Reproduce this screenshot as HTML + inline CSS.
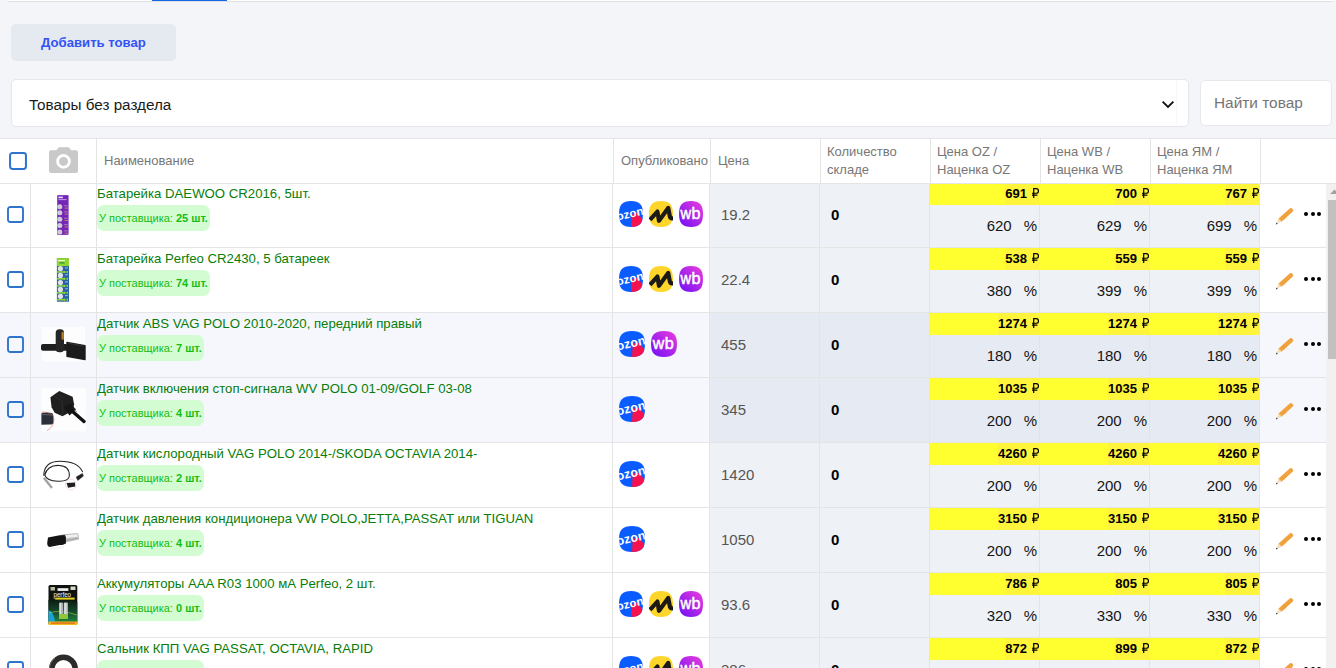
<!DOCTYPE html><html><head><meta charset="utf-8"><style>
*{box-sizing:border-box;margin:0;padding:0}
html,body{width:1336px;height:668px;overflow:hidden;background:#f4f5f9;font-family:"Liberation Sans",sans-serif;position:relative}
.abs{position:absolute}
.t{position:absolute;white-space:nowrap;line-height:1}
.vl{position:absolute;width:1px;background:#e4e4e4}
.hl{position:absolute;height:1px;background:#e5e5e5}
.rub{display:inline-block;vertical-align:baseline;margin-left:5px}
</style></head><body>
<div class="abs" style="left:8px;top:0;width:1326px;height:1px;background:#fff"></div>
<div class="abs" style="left:8px;top:1px;width:1326px;height:1px;background:#e1e1e3"></div>
<div class="abs" style="left:152px;top:0;width:75px;height:1px;background:#1565e8"></div>
<div class="abs" style="left:11px;top:24px;width:165px;height:37px;background:#e5e9f0;border-radius:5px"></div>
<div class="t" style="left:41px;top:36px;font-size:13.15px;font-weight:bold;color:#3352f5">Добавить товар</div>
<div class="abs" style="left:11px;top:79px;width:1178px;height:48px;background:#fff;border:1px solid #e4e6eb;border-radius:5px"></div>
<div class="t" style="left:29px;top:97px;font-size:15.25px;color:#1a1a1a">Товары без раздела</div>
<svg class="abs" style="left:1160px;top:98px" width="16" height="12" viewBox="0 0 16 12"><path d="M2.6 3.6 8 8.9 13.4 3.6" fill="none" stroke="#111" stroke-width="1.9"/></svg>
<div class="abs" style="left:1176px;top:80px;width:1px;height:46px;background:#f8f8fa"></div>
<div class="abs" style="left:1200px;top:80px;width:132px;height:46px;background:#fff;border:1px solid #e6e8ec;border-radius:5px"></div>
<div class="t" style="left:1214px;top:95px;font-size:15.4px;color:#757575">Найти товар</div>
<div class="abs" style="left:0;top:138px;width:1336px;height:530px;background:#fff"></div>
<div class="hl" style="left:0;top:138px;width:1336px"></div>
<div class="abs" style="left:0;top:183px;width:1326px;height:64px;background:#fff"></div>
<div class="abs" style="left:710px;top:183px;width:549px;height:64px;background:#eef1f6"></div>
<div class="abs" style="left:930px;top:183px;width:109px;height:22px;background:#ffff30"></div>
<div class="abs" style="left:1040px;top:183px;width:109px;height:22px;background:#ffff30"></div>
<div class="abs" style="left:1150px;top:183px;width:109px;height:22px;background:#ffff30"></div>
<div class="hl" style="left:0;top:247px;width:1326px"></div>
<svg class="abs" style="left:7px;top:206px" width="17" height="17" viewBox="0 0 17 17"><rect x="1" y="1" width="15" height="15" rx="2.2" fill="none" stroke="#2f74cc" stroke-width="1.9"/></svg>
<div class="abs" style="left:0;top:183px;width:96px;height:64px"><svg class="abs" style="left:31px;top:0" width="65" height="64" viewBox="0 0 65 64"><rect x="26.1" y="12.1" width="11.6" height="39.8" rx="0.8" fill="#8a4ac8"/><rect x="26.8" y="12.8" width="10.2" height="38.4" fill="#7327b8"/><rect x="27.4" y="13.6" width="4.5" height="1.6" fill="#e6d8f5"/><rect x="27.6" y="16.2" width="8" height="0.9" fill="#c8a8ea"/><circle cx="28.8" cy="23.8" r="2.5" fill="#cfcdd6"/><rect x="33.2" y="22.400000000000002" width="3.4" height="0.9" fill="#b78ab0"/><rect x="33.6" y="24.6" width="3.4" height="1" fill="#d07a50"/><circle cx="28.8" cy="29.8" r="2.5" fill="#cfcdd6"/><rect x="33.2" y="28.400000000000002" width="3.4" height="0.9" fill="#b78ab0"/><rect x="33.6" y="30.6" width="3.4" height="1" fill="#d07a50"/><circle cx="28.8" cy="36.2" r="2.5" fill="#cfcdd6"/><rect x="33.2" y="34.800000000000004" width="3.4" height="0.9" fill="#b78ab0"/><rect x="33.6" y="37.0" width="3.4" height="1" fill="#d07a50"/><circle cx="28.8" cy="42.6" r="2.5" fill="#cfcdd6"/><rect x="33.2" y="41.2" width="3.4" height="0.9" fill="#b78ab0"/><rect x="33.6" y="43.4" width="3.4" height="1" fill="#d07a50"/><circle cx="28.8" cy="48.9" r="2.5" fill="#cfcdd6"/><rect x="33.2" y="47.5" width="3.4" height="0.9" fill="#b78ab0"/><rect x="33.6" y="49.699999999999996" width="3.4" height="1" fill="#d07a50"/></svg></div>
<div class="t" style="left:97px;top:187px;font-size:13.2px;color:#087d08">Батарейка DAEWOO CR2016, 5шт.</div>
<div class="t" style="left:97px;top:205px;height:26px;line-height:26px;padding:0 2px;background:#d3fcd3;border-radius:7px;font-size:11px;color:#14bd14">У поставщика: <b>25 шт.</b></div>
<div class="abs" style="left:619px;top:201px;height:26px"><svg class="mp" width="24" height="26" viewBox="0 0 24 26"><defs><clipPath id="sq0o"><path d="M12.0 0C20.52 0 24 3.77 24 13.0C24 22.23 20.52 26 12.0 26C3.48 26 0 22.23 0 13.0C0 3.77 3.48 0 12.0 0Z"/></clipPath></defs><g clip-path="url(#sq0o)"><rect width="24" height="26" fill="#0a5cff"/><path d="M12.00 26 12.60 14.5 15.00 11.5 18.50 12 24 19.2V26Z" fill="#f5124f"/><g transform="translate(-1.40 19.6) rotate(-13)"><text x="0" y="0" font-family="Liberation Sans" font-weight="bold" font-size="11.50" letter-spacing="0.10" fill="#fff">ozon</text></g></g></svg></div>
<div class="abs" style="left:649px;top:201px;height:26px"><svg class="mp" width="24" height="26" viewBox="0 0 24 26"><path d="M12.0 0C20.52 0 24 3.77 24 13.0C24 22.23 20.52 26 12.0 26C3.48 26 0 22.23 0 13.0C0 3.77 3.48 0 12.0 0Z" fill="#fdd52b"/><path d="M1.00 18.8 8.40 10.6 10.00 19.8 19.20 7 21.00 16.2Q21.80 18 25.00 17.2" fill="none" stroke="#1b1a17" stroke-width="4.2" stroke-linejoin="round"/></svg></div>
<div class="abs" style="left:679px;top:201px;height:26px"><svg class="mp" width="24" height="26" viewBox="0 0 24 26"><defs><linearGradient id="wg0w" x1="1" y1="0" x2="0" y2="1"><stop offset="0" stop-color="#ee3ddc"/><stop offset="1" stop-color="#6c0ff6"/></linearGradient></defs><path d="M12.0 0C20.52 0 24 3.77 24 13.0C24 22.23 20.52 26 12.0 26C3.48 26 0 22.23 0 13.0C0 3.77 3.48 0 12.0 0Z" fill="url(#wg0w)"/><text y="18" font-family="Liberation Sans" font-size="16.2" fill="#fff" stroke="#fff" stroke-width="0.5"><tspan x="1.60" textLength="10.60" lengthAdjust="spacingAndGlyphs">w</tspan><tspan x="12.60">b</tspan></text></svg></div>
<div class="t" style="left:721px;top:207px;font-size:15px;color:#555">19.2</div>
<div class="t" style="left:831px;top:207px;font-size:15px;font-weight:bold;color:#000">0</div>
<div class="t" style="right:297px;top:183px;height:22px;line-height:22px;font-size:13px;font-weight:bold;color:#000;background:#fff43c;padding-right:0">691<svg class="rub" width="7" height="10" viewBox="0 0 7 10"><path d="M1.7 10V0.65h2.5a2.3 2.3 0 0 1 0 4.6H0M0 7.1h5.4" fill="none" stroke="#000" stroke-width="1.2"/></svg></div>
<div class="t" style="right:299px;top:218px;font-size:15px;color:#151515">620<span style="margin-left:12px">%</span></div>
<div class="t" style="right:187px;top:183px;height:22px;line-height:22px;font-size:13px;font-weight:bold;color:#000;background:#fff43c;padding-right:0">700<svg class="rub" width="7" height="10" viewBox="0 0 7 10"><path d="M1.7 10V0.65h2.5a2.3 2.3 0 0 1 0 4.6H0M0 7.1h5.4" fill="none" stroke="#000" stroke-width="1.2"/></svg></div>
<div class="t" style="right:189px;top:218px;font-size:15px;color:#151515">629<span style="margin-left:12px">%</span></div>
<div class="t" style="right:77px;top:183px;height:22px;line-height:22px;font-size:13px;font-weight:bold;color:#000;background:#fff43c;padding-right:0">767<svg class="rub" width="7" height="10" viewBox="0 0 7 10"><path d="M1.7 10V0.65h2.5a2.3 2.3 0 0 1 0 4.6H0M0 7.1h5.4" fill="none" stroke="#000" stroke-width="1.2"/></svg></div>
<div class="t" style="right:79px;top:218px;font-size:15px;color:#151515">699<span style="margin-left:12px">%</span></div>
<svg class="abs" style="left:1274px;top:206px" width="20" height="20" viewBox="0 0 20 20"><path d="M6.6 13.6 16.9 4.4" stroke="#f0a23e" stroke-width="4.4" stroke-linecap="round"/><path d="M8.4 11.2 11 13.4M10 9.8 12.6 12" stroke="#e59430" stroke-width="0.5"/><path d="M4.6 12.6 7.8 15.6 2.8 17.6Z" fill="#f4dcb4"/><path d="M2.4 16.4 3.9 17.8 1.9 18.5Z" fill="#3a3a3a"/></svg>
<div class="abs" style="left:1304.0px;top:212.3px;width:4.1px;height:4.1px;border-radius:50%;background:#000"></div>
<div class="abs" style="left:1310.7px;top:212.3px;width:4.1px;height:4.1px;border-radius:50%;background:#000"></div>
<div class="abs" style="left:1317.4px;top:212.3px;width:4.1px;height:4.1px;border-radius:50%;background:#000"></div>
<div class="abs" style="left:0;top:248px;width:1326px;height:64px;background:#fff"></div>
<div class="abs" style="left:710px;top:248px;width:549px;height:64px;background:#eef1f6"></div>
<div class="abs" style="left:930px;top:248px;width:109px;height:22px;background:#ffff30"></div>
<div class="abs" style="left:1040px;top:248px;width:109px;height:22px;background:#ffff30"></div>
<div class="abs" style="left:1150px;top:248px;width:109px;height:22px;background:#ffff30"></div>
<div class="hl" style="left:0;top:312px;width:1326px"></div>
<svg class="abs" style="left:7px;top:271px" width="17" height="17" viewBox="0 0 17 17"><rect x="1" y="1" width="15" height="15" rx="2.2" fill="none" stroke="#2f74cc" stroke-width="1.9"/></svg>
<div class="abs" style="left:0;top:248px;width:96px;height:64px"><svg class="abs" style="left:31px;top:0" width="65" height="64" viewBox="0 0 65 64"><rect x="25.9" y="10.1" width="12.1" height="43.6" fill="#2b62a6"/><rect x="25.9" y="10.1" width="12.1" height="8" fill="#8fd633"/><rect x="27" y="12" width="7" height="1.2" fill="#e9f8d0"/><rect x="28.5" y="14.3" width="5" height="1.2" fill="#3a8a30"/><rect x="25.9" y="23.200000000000003" width="8" height="1.6" fill="#8fd633"/><rect x="33" y="23.0" width="1.5" height="2" fill="#8fd633"/><rect x="35.5" y="23.0" width="1.5" height="2" fill="#8fd633"/><circle cx="29.4" cy="20.6" r="2.6" fill="#dfe3e6"/><rect x="34" y="19.6" width="3" height="0.8" fill="#b8d0e8"/><rect x="25.9" y="30.0" width="8" height="1.6" fill="#8fd633"/><rect x="33" y="29.799999999999997" width="1.5" height="2" fill="#8fd633"/><rect x="35.5" y="29.799999999999997" width="1.5" height="2" fill="#8fd633"/><circle cx="29.4" cy="27.4" r="2.6" fill="#dfe3e6"/><rect x="34" y="26.4" width="3" height="0.8" fill="#b8d0e8"/><rect x="25.9" y="37.1" width="8" height="1.6" fill="#8fd633"/><rect x="33" y="36.9" width="1.5" height="2" fill="#8fd633"/><rect x="35.5" y="36.9" width="1.5" height="2" fill="#8fd633"/><circle cx="29.4" cy="34.5" r="2.6" fill="#dfe3e6"/><rect x="34" y="33.5" width="3" height="0.8" fill="#b8d0e8"/><rect x="25.9" y="44.0" width="8" height="1.6" fill="#8fd633"/><rect x="33" y="43.8" width="1.5" height="2" fill="#8fd633"/><rect x="35.5" y="43.8" width="1.5" height="2" fill="#8fd633"/><circle cx="29.4" cy="41.4" r="2.6" fill="#dfe3e6"/><rect x="34" y="40.4" width="3" height="0.8" fill="#b8d0e8"/><rect x="25.9" y="50.9" width="8" height="1.6" fill="#8fd633"/><rect x="33" y="50.699999999999996" width="1.5" height="2" fill="#8fd633"/><rect x="35.5" y="50.699999999999996" width="1.5" height="2" fill="#8fd633"/><circle cx="29.4" cy="48.3" r="2.6" fill="#dfe3e6"/><rect x="34" y="47.3" width="3" height="0.8" fill="#b8d0e8"/></svg></div>
<div class="t" style="left:97px;top:252px;font-size:13.2px;color:#087d08">Батарейка Perfeo CR2430, 5 батареек</div>
<div class="t" style="left:97px;top:270px;height:26px;line-height:26px;padding:0 2px;background:#d3fcd3;border-radius:7px;font-size:11px;color:#14bd14">У поставщика: <b>74 шт.</b></div>
<div class="abs" style="left:619px;top:266px;height:26px"><svg class="mp" width="24" height="26" viewBox="0 0 24 26"><defs><clipPath id="sq1o"><path d="M12.0 0C20.52 0 24 3.77 24 13.0C24 22.23 20.52 26 12.0 26C3.48 26 0 22.23 0 13.0C0 3.77 3.48 0 12.0 0Z"/></clipPath></defs><g clip-path="url(#sq1o)"><rect width="24" height="26" fill="#0a5cff"/><path d="M12.00 26 12.60 14.5 15.00 11.5 18.50 12 24 19.2V26Z" fill="#f5124f"/><g transform="translate(-1.40 19.6) rotate(-13)"><text x="0" y="0" font-family="Liberation Sans" font-weight="bold" font-size="11.50" letter-spacing="0.10" fill="#fff">ozon</text></g></g></svg></div>
<div class="abs" style="left:649px;top:266px;height:26px"><svg class="mp" width="24" height="26" viewBox="0 0 24 26"><path d="M12.0 0C20.52 0 24 3.77 24 13.0C24 22.23 20.52 26 12.0 26C3.48 26 0 22.23 0 13.0C0 3.77 3.48 0 12.0 0Z" fill="#fdd52b"/><path d="M1.00 18.8 8.40 10.6 10.00 19.8 19.20 7 21.00 16.2Q21.80 18 25.00 17.2" fill="none" stroke="#1b1a17" stroke-width="4.2" stroke-linejoin="round"/></svg></div>
<div class="abs" style="left:679px;top:266px;height:26px"><svg class="mp" width="24" height="26" viewBox="0 0 24 26"><defs><linearGradient id="wg1w" x1="1" y1="0" x2="0" y2="1"><stop offset="0" stop-color="#ee3ddc"/><stop offset="1" stop-color="#6c0ff6"/></linearGradient></defs><path d="M12.0 0C20.52 0 24 3.77 24 13.0C24 22.23 20.52 26 12.0 26C3.48 26 0 22.23 0 13.0C0 3.77 3.48 0 12.0 0Z" fill="url(#wg1w)"/><text y="18" font-family="Liberation Sans" font-size="16.2" fill="#fff" stroke="#fff" stroke-width="0.5"><tspan x="1.60" textLength="10.60" lengthAdjust="spacingAndGlyphs">w</tspan><tspan x="12.60">b</tspan></text></svg></div>
<div class="t" style="left:721px;top:272px;font-size:15px;color:#555">22.4</div>
<div class="t" style="left:831px;top:272px;font-size:15px;font-weight:bold;color:#000">0</div>
<div class="t" style="right:297px;top:248px;height:22px;line-height:22px;font-size:13px;font-weight:bold;color:#000;background:#fff43c;padding-right:0">538<svg class="rub" width="7" height="10" viewBox="0 0 7 10"><path d="M1.7 10V0.65h2.5a2.3 2.3 0 0 1 0 4.6H0M0 7.1h5.4" fill="none" stroke="#000" stroke-width="1.2"/></svg></div>
<div class="t" style="right:299px;top:283px;font-size:15px;color:#151515">380<span style="margin-left:12px">%</span></div>
<div class="t" style="right:187px;top:248px;height:22px;line-height:22px;font-size:13px;font-weight:bold;color:#000;background:#fff43c;padding-right:0">559<svg class="rub" width="7" height="10" viewBox="0 0 7 10"><path d="M1.7 10V0.65h2.5a2.3 2.3 0 0 1 0 4.6H0M0 7.1h5.4" fill="none" stroke="#000" stroke-width="1.2"/></svg></div>
<div class="t" style="right:189px;top:283px;font-size:15px;color:#151515">399<span style="margin-left:12px">%</span></div>
<div class="t" style="right:77px;top:248px;height:22px;line-height:22px;font-size:13px;font-weight:bold;color:#000;background:#fff43c;padding-right:0">559<svg class="rub" width="7" height="10" viewBox="0 0 7 10"><path d="M1.7 10V0.65h2.5a2.3 2.3 0 0 1 0 4.6H0M0 7.1h5.4" fill="none" stroke="#000" stroke-width="1.2"/></svg></div>
<div class="t" style="right:79px;top:283px;font-size:15px;color:#151515">399<span style="margin-left:12px">%</span></div>
<svg class="abs" style="left:1274px;top:271px" width="20" height="20" viewBox="0 0 20 20"><path d="M6.6 13.6 16.9 4.4" stroke="#f0a23e" stroke-width="4.4" stroke-linecap="round"/><path d="M8.4 11.2 11 13.4M10 9.8 12.6 12" stroke="#e59430" stroke-width="0.5"/><path d="M4.6 12.6 7.8 15.6 2.8 17.6Z" fill="#f4dcb4"/><path d="M2.4 16.4 3.9 17.8 1.9 18.5Z" fill="#3a3a3a"/></svg>
<div class="abs" style="left:1304.0px;top:277.3px;width:4.1px;height:4.1px;border-radius:50%;background:#000"></div>
<div class="abs" style="left:1310.7px;top:277.3px;width:4.1px;height:4.1px;border-radius:50%;background:#000"></div>
<div class="abs" style="left:1317.4px;top:277.3px;width:4.1px;height:4.1px;border-radius:50%;background:#000"></div>
<div class="abs" style="left:0;top:313px;width:1326px;height:64px;background:#f5f7fc"></div>
<div class="abs" style="left:710px;top:313px;width:549px;height:64px;background:#e6eaf2"></div>
<div class="abs" style="left:930px;top:313px;width:109px;height:22px;background:#ffff30"></div>
<div class="abs" style="left:1040px;top:313px;width:109px;height:22px;background:#ffff30"></div>
<div class="abs" style="left:1150px;top:313px;width:109px;height:22px;background:#ffff30"></div>
<div class="hl" style="left:0;top:377px;width:1326px"></div>
<svg class="abs" style="left:7px;top:336px" width="17" height="17" viewBox="0 0 17 17"><rect x="1" y="1" width="15" height="15" rx="2.2" fill="none" stroke="#2f74cc" stroke-width="1.9"/></svg>
<div class="abs" style="left:0;top:313px;width:96px;height:64px"><svg class="abs" style="left:31px;top:0" width="65" height="64" viewBox="0 0 65 64"><rect x="11" y="14" width="43" height="34.5" fill="#fdfdfd"/><rect x="10" y="31" width="27" height="6.8" rx="2" fill="#1f1f1f"/><rect x="24.7" y="16.2" width="8.3" height="23.1" rx="3.6" fill="#262626"/><rect x="30.5" y="19" width="2.4" height="7.8" rx="1" fill="#b87a24"/><path d="M36 29.4 54 32.7 54 46.5 36 43.2Z" fill="#1b1b1b" stroke="#1b1b1b" stroke-width="1.4" stroke-linejoin="round"/><path d="M37 30.2 53 33" stroke="#3a3a3a" stroke-width="0.8"/></svg></div>
<div class="t" style="left:97px;top:317px;font-size:13.2px;color:#087d08">Датчик ABS VAG POLO 2010-2020, передний правый</div>
<div class="t" style="left:97px;top:335px;height:26px;line-height:26px;padding:0 2px;background:#d3fcd3;border-radius:7px;font-size:11px;color:#14bd14">У поставщика: <b>7 шт.</b></div>
<div class="abs" style="left:619px;top:331px;height:26px"><svg class="mp" width="26" height="26" viewBox="0 0 26 26"><defs><clipPath id="sq2o"><path d="M13.0 0C22.23 0 26 3.77 26 13.0C26 22.23 22.23 26 13.0 26C3.77 26 0 22.23 0 13.0C0 3.77 3.77 0 13.0 0Z"/></clipPath></defs><g clip-path="url(#sq2o)"><rect width="26" height="26" fill="#0a5cff"/><path d="M13.00 26 13.65 14.5 16.25 11.5 20.04 12 26 19.2V26Z" fill="#f5124f"/><g transform="translate(-1.52 19.6) rotate(-13)"><text x="0" y="0" font-family="Liberation Sans" font-weight="bold" font-size="12.46" letter-spacing="0.11" fill="#fff">ozon</text></g></g></svg></div>
<div class="abs" style="left:651px;top:331px;height:26px"><svg class="mp" width="26" height="26" viewBox="0 0 26 26"><defs><linearGradient id="wg2w" x1="1" y1="0" x2="0" y2="1"><stop offset="0" stop-color="#ee3ddc"/><stop offset="1" stop-color="#6c0ff6"/></linearGradient></defs><path d="M13.0 0C22.23 0 26 3.77 26 13.0C26 22.23 22.23 26 13.0 26C3.77 26 0 22.23 0 13.0C0 3.77 3.77 0 13.0 0Z" fill="url(#wg2w)"/><text y="18" font-family="Liberation Sans" font-size="16.2" fill="#fff" stroke="#fff" stroke-width="0.5"><tspan x="1.73" textLength="11.48" lengthAdjust="spacingAndGlyphs">w</tspan><tspan x="13.65">b</tspan></text></svg></div>
<div class="t" style="left:721px;top:337px;font-size:15px;color:#555">455</div>
<div class="t" style="left:831px;top:337px;font-size:15px;font-weight:bold;color:#000">0</div>
<div class="t" style="right:297px;top:313px;height:22px;line-height:22px;font-size:13px;font-weight:bold;color:#000;background:#fff43c;padding-right:0">1274<svg class="rub" width="7" height="10" viewBox="0 0 7 10"><path d="M1.7 10V0.65h2.5a2.3 2.3 0 0 1 0 4.6H0M0 7.1h5.4" fill="none" stroke="#000" stroke-width="1.2"/></svg></div>
<div class="t" style="right:299px;top:348px;font-size:15px;color:#151515">180<span style="margin-left:12px">%</span></div>
<div class="t" style="right:187px;top:313px;height:22px;line-height:22px;font-size:13px;font-weight:bold;color:#000;background:#fff43c;padding-right:0">1274<svg class="rub" width="7" height="10" viewBox="0 0 7 10"><path d="M1.7 10V0.65h2.5a2.3 2.3 0 0 1 0 4.6H0M0 7.1h5.4" fill="none" stroke="#000" stroke-width="1.2"/></svg></div>
<div class="t" style="right:189px;top:348px;font-size:15px;color:#151515">180<span style="margin-left:12px">%</span></div>
<div class="t" style="right:77px;top:313px;height:22px;line-height:22px;font-size:13px;font-weight:bold;color:#000;background:#fff43c;padding-right:0">1274<svg class="rub" width="7" height="10" viewBox="0 0 7 10"><path d="M1.7 10V0.65h2.5a2.3 2.3 0 0 1 0 4.6H0M0 7.1h5.4" fill="none" stroke="#000" stroke-width="1.2"/></svg></div>
<div class="t" style="right:79px;top:348px;font-size:15px;color:#151515">180<span style="margin-left:12px">%</span></div>
<svg class="abs" style="left:1274px;top:336px" width="20" height="20" viewBox="0 0 20 20"><path d="M6.6 13.6 16.9 4.4" stroke="#f0a23e" stroke-width="4.4" stroke-linecap="round"/><path d="M8.4 11.2 11 13.4M10 9.8 12.6 12" stroke="#e59430" stroke-width="0.5"/><path d="M4.6 12.6 7.8 15.6 2.8 17.6Z" fill="#f4dcb4"/><path d="M2.4 16.4 3.9 17.8 1.9 18.5Z" fill="#3a3a3a"/></svg>
<div class="abs" style="left:1304.0px;top:342.3px;width:4.1px;height:4.1px;border-radius:50%;background:#000"></div>
<div class="abs" style="left:1310.7px;top:342.3px;width:4.1px;height:4.1px;border-radius:50%;background:#000"></div>
<div class="abs" style="left:1317.4px;top:342.3px;width:4.1px;height:4.1px;border-radius:50%;background:#000"></div>
<div class="abs" style="left:0;top:378px;width:1326px;height:64px;background:#f5f7fc"></div>
<div class="abs" style="left:710px;top:378px;width:549px;height:64px;background:#e6eaf2"></div>
<div class="abs" style="left:930px;top:378px;width:109px;height:22px;background:#ffff30"></div>
<div class="abs" style="left:1040px;top:378px;width:109px;height:22px;background:#ffff30"></div>
<div class="abs" style="left:1150px;top:378px;width:109px;height:22px;background:#ffff30"></div>
<div class="hl" style="left:0;top:442px;width:1326px"></div>
<svg class="abs" style="left:7px;top:401px" width="17" height="17" viewBox="0 0 17 17"><rect x="1" y="1" width="15" height="15" rx="2.2" fill="none" stroke="#2f74cc" stroke-width="1.9"/></svg>
<div class="abs" style="left:0;top:378px;width:96px;height:64px"><svg class="abs" style="left:31px;top:0" width="65" height="64" viewBox="0 0 65 64"><rect x="10.4" y="9.9" width="44.4" height="43.6" fill="#fdfdfd"/><path d="M19.4 19.2 28.3 13 41.6 18.8 43.1 26.2 42 32.5 31.5 38.2 23.7 34.8 20.6 29.3Z" fill="#1f1f1f"/><path d="M22 17.5 31 23 32 37" stroke="#383838" stroke-width="0.6" fill="none"/><path d="M25 15.5 34 20.5" stroke="#333" stroke-width="0.5"/><path d="M32.5 29 39.5 25.5 45 31.5 38.5 37.5Z" fill="#161616"/><path d="M41 33 53 43.5" stroke="#111" stroke-width="3.4" stroke-linecap="round"/><path d="M42 30.5 46 34" stroke="#444" stroke-width="0.5"/><path d="M10.4 35.5Q11 34.4 16 34.4L21 35Q22.5 36 22.5 40V45Q22 46.5 18 46.5L10.4 46.8Z" fill="#2b313b"/><path d="M11 36.5 21 37" stroke="#5a6270" stroke-width="1"/><path d="M10.8 34Q22.5 34 23 41Q22.5 49.5 16 52.5" stroke="#e05858" stroke-width="0.55" fill="none"/></svg></div>
<div class="t" style="left:97px;top:382px;font-size:13.2px;color:#087d08">Датчик включения стоп-сигнала WV POLO 01-09/GOLF 03-08</div>
<div class="t" style="left:97px;top:400px;height:26px;line-height:26px;padding:0 2px;background:#d3fcd3;border-radius:7px;font-size:11px;color:#14bd14">У поставщика: <b>4 шт.</b></div>
<div class="abs" style="left:619px;top:396px;height:26px"><svg class="mp" width="26" height="26" viewBox="0 0 26 26"><defs><clipPath id="sq3o"><path d="M13.0 0C22.23 0 26 3.77 26 13.0C26 22.23 22.23 26 13.0 26C3.77 26 0 22.23 0 13.0C0 3.77 3.77 0 13.0 0Z"/></clipPath></defs><g clip-path="url(#sq3o)"><rect width="26" height="26" fill="#0a5cff"/><path d="M13.00 26 13.65 14.5 16.25 11.5 20.04 12 26 19.2V26Z" fill="#f5124f"/><g transform="translate(-1.52 19.6) rotate(-13)"><text x="0" y="0" font-family="Liberation Sans" font-weight="bold" font-size="12.46" letter-spacing="0.11" fill="#fff">ozon</text></g></g></svg></div>
<div class="t" style="left:721px;top:402px;font-size:15px;color:#555">345</div>
<div class="t" style="left:831px;top:402px;font-size:15px;font-weight:bold;color:#000">0</div>
<div class="t" style="right:297px;top:378px;height:22px;line-height:22px;font-size:13px;font-weight:bold;color:#000;background:#fff43c;padding-right:0">1035<svg class="rub" width="7" height="10" viewBox="0 0 7 10"><path d="M1.7 10V0.65h2.5a2.3 2.3 0 0 1 0 4.6H0M0 7.1h5.4" fill="none" stroke="#000" stroke-width="1.2"/></svg></div>
<div class="t" style="right:299px;top:413px;font-size:15px;color:#151515">200<span style="margin-left:12px">%</span></div>
<div class="t" style="right:187px;top:378px;height:22px;line-height:22px;font-size:13px;font-weight:bold;color:#000;background:#fff43c;padding-right:0">1035<svg class="rub" width="7" height="10" viewBox="0 0 7 10"><path d="M1.7 10V0.65h2.5a2.3 2.3 0 0 1 0 4.6H0M0 7.1h5.4" fill="none" stroke="#000" stroke-width="1.2"/></svg></div>
<div class="t" style="right:189px;top:413px;font-size:15px;color:#151515">200<span style="margin-left:12px">%</span></div>
<div class="t" style="right:77px;top:378px;height:22px;line-height:22px;font-size:13px;font-weight:bold;color:#000;background:#fff43c;padding-right:0">1035<svg class="rub" width="7" height="10" viewBox="0 0 7 10"><path d="M1.7 10V0.65h2.5a2.3 2.3 0 0 1 0 4.6H0M0 7.1h5.4" fill="none" stroke="#000" stroke-width="1.2"/></svg></div>
<div class="t" style="right:79px;top:413px;font-size:15px;color:#151515">200<span style="margin-left:12px">%</span></div>
<svg class="abs" style="left:1274px;top:401px" width="20" height="20" viewBox="0 0 20 20"><path d="M6.6 13.6 16.9 4.4" stroke="#f0a23e" stroke-width="4.4" stroke-linecap="round"/><path d="M8.4 11.2 11 13.4M10 9.8 12.6 12" stroke="#e59430" stroke-width="0.5"/><path d="M4.6 12.6 7.8 15.6 2.8 17.6Z" fill="#f4dcb4"/><path d="M2.4 16.4 3.9 17.8 1.9 18.5Z" fill="#3a3a3a"/></svg>
<div class="abs" style="left:1304.0px;top:407.3px;width:4.1px;height:4.1px;border-radius:50%;background:#000"></div>
<div class="abs" style="left:1310.7px;top:407.3px;width:4.1px;height:4.1px;border-radius:50%;background:#000"></div>
<div class="abs" style="left:1317.4px;top:407.3px;width:4.1px;height:4.1px;border-radius:50%;background:#000"></div>
<div class="abs" style="left:0;top:443px;width:1326px;height:64px;background:#fff"></div>
<div class="abs" style="left:710px;top:443px;width:549px;height:64px;background:#eef1f6"></div>
<div class="abs" style="left:930px;top:443px;width:109px;height:22px;background:#ffff30"></div>
<div class="abs" style="left:1040px;top:443px;width:109px;height:22px;background:#ffff30"></div>
<div class="abs" style="left:1150px;top:443px;width:109px;height:22px;background:#ffff30"></div>
<div class="hl" style="left:0;top:507px;width:1326px"></div>
<svg class="abs" style="left:7px;top:466px" width="17" height="17" viewBox="0 0 17 17"><rect x="1" y="1" width="15" height="15" rx="2.2" fill="none" stroke="#2f74cc" stroke-width="1.9"/></svg>
<div class="abs" style="left:0;top:443px;width:96px;height:64px"><svg class="abs" style="left:31px;top:0" width="65" height="64" viewBox="0 0 65 64"><path d="M12.7 32.8C13 22 20 18.3 29 18.3C40 18.3 48 21 51.7 29" stroke="#222" stroke-width="1.05" fill="none"/><path d="M13.5 32.5C15.5 25 21 22.2 27.8 22.4C34 22.5 38.5 25 38.4 32.8C38 37 33 38.5 27 38.3C20 38 15 36 13.9 32.1" stroke="#222" stroke-width="1.05" fill="none"/><path d="M45.2 34 51.4 30.4 52.4 33 46.8 37.4Z" fill="#222" stroke="#222" stroke-width="0.5" stroke-linejoin="round"/><path d="M12.8 34.8 21 45" stroke="#a8a8a8" stroke-width="2.4"/><path d="M14 36.6 20 44" stroke="#7a7a7a" stroke-width="0.6" stroke-dasharray="0.8 0.8"/><circle cx="39.7" cy="41.6" r="5.4" fill="#fff" stroke="#f0b8b8" stroke-width="0.5"/><path d="M35.6 40 44 39.4 44.2 43.5 37 44.8Z" fill="#1e1e1e"/></svg></div>
<div class="t" style="left:97px;top:447px;font-size:13.2px;color:#087d08">Датчик кислородный VAG POLO 2014-/SKODA OCTAVIA 2014-</div>
<div class="t" style="left:97px;top:465px;height:26px;line-height:26px;padding:0 2px;background:#d3fcd3;border-radius:7px;font-size:11px;color:#14bd14">У поставщика: <b>2 шт.</b></div>
<div class="abs" style="left:619px;top:461px;height:26px"><svg class="mp" width="26" height="26" viewBox="0 0 26 26"><defs><clipPath id="sq4o"><path d="M13.0 0C22.23 0 26 3.77 26 13.0C26 22.23 22.23 26 13.0 26C3.77 26 0 22.23 0 13.0C0 3.77 3.77 0 13.0 0Z"/></clipPath></defs><g clip-path="url(#sq4o)"><rect width="26" height="26" fill="#0a5cff"/><path d="M13.00 26 13.65 14.5 16.25 11.5 20.04 12 26 19.2V26Z" fill="#f5124f"/><g transform="translate(-1.52 19.6) rotate(-13)"><text x="0" y="0" font-family="Liberation Sans" font-weight="bold" font-size="12.46" letter-spacing="0.11" fill="#fff">ozon</text></g></g></svg></div>
<div class="t" style="left:721px;top:467px;font-size:15px;color:#555">1420</div>
<div class="t" style="left:831px;top:467px;font-size:15px;font-weight:bold;color:#000">0</div>
<div class="t" style="right:297px;top:443px;height:22px;line-height:22px;font-size:13px;font-weight:bold;color:#000;background:#fff43c;padding-right:0">4260<svg class="rub" width="7" height="10" viewBox="0 0 7 10"><path d="M1.7 10V0.65h2.5a2.3 2.3 0 0 1 0 4.6H0M0 7.1h5.4" fill="none" stroke="#000" stroke-width="1.2"/></svg></div>
<div class="t" style="right:299px;top:478px;font-size:15px;color:#151515">200<span style="margin-left:12px">%</span></div>
<div class="t" style="right:187px;top:443px;height:22px;line-height:22px;font-size:13px;font-weight:bold;color:#000;background:#fff43c;padding-right:0">4260<svg class="rub" width="7" height="10" viewBox="0 0 7 10"><path d="M1.7 10V0.65h2.5a2.3 2.3 0 0 1 0 4.6H0M0 7.1h5.4" fill="none" stroke="#000" stroke-width="1.2"/></svg></div>
<div class="t" style="right:189px;top:478px;font-size:15px;color:#151515">200<span style="margin-left:12px">%</span></div>
<div class="t" style="right:77px;top:443px;height:22px;line-height:22px;font-size:13px;font-weight:bold;color:#000;background:#fff43c;padding-right:0">4260<svg class="rub" width="7" height="10" viewBox="0 0 7 10"><path d="M1.7 10V0.65h2.5a2.3 2.3 0 0 1 0 4.6H0M0 7.1h5.4" fill="none" stroke="#000" stroke-width="1.2"/></svg></div>
<div class="t" style="right:79px;top:478px;font-size:15px;color:#151515">200<span style="margin-left:12px">%</span></div>
<svg class="abs" style="left:1274px;top:466px" width="20" height="20" viewBox="0 0 20 20"><path d="M6.6 13.6 16.9 4.4" stroke="#f0a23e" stroke-width="4.4" stroke-linecap="round"/><path d="M8.4 11.2 11 13.4M10 9.8 12.6 12" stroke="#e59430" stroke-width="0.5"/><path d="M4.6 12.6 7.8 15.6 2.8 17.6Z" fill="#f4dcb4"/><path d="M2.4 16.4 3.9 17.8 1.9 18.5Z" fill="#3a3a3a"/></svg>
<div class="abs" style="left:1304.0px;top:472.3px;width:4.1px;height:4.1px;border-radius:50%;background:#000"></div>
<div class="abs" style="left:1310.7px;top:472.3px;width:4.1px;height:4.1px;border-radius:50%;background:#000"></div>
<div class="abs" style="left:1317.4px;top:472.3px;width:4.1px;height:4.1px;border-radius:50%;background:#000"></div>
<div class="abs" style="left:0;top:508px;width:1326px;height:64px;background:#fff"></div>
<div class="abs" style="left:710px;top:508px;width:549px;height:64px;background:#eef1f6"></div>
<div class="abs" style="left:930px;top:508px;width:109px;height:22px;background:#ffff30"></div>
<div class="abs" style="left:1040px;top:508px;width:109px;height:22px;background:#ffff30"></div>
<div class="abs" style="left:1150px;top:508px;width:109px;height:22px;background:#ffff30"></div>
<div class="hl" style="left:0;top:572px;width:1326px"></div>
<svg class="abs" style="left:7px;top:531px" width="17" height="17" viewBox="0 0 17 17"><rect x="1" y="1" width="15" height="15" rx="2.2" fill="none" stroke="#2f74cc" stroke-width="1.9"/></svg>
<div class="abs" style="left:0;top:508px;width:96px;height:64px"><svg class="abs" style="left:31px;top:0" width="65" height="64" viewBox="0 0 65 64"><path d="M30 26.6 45.6 24.9Q47.9 25 47.9 28.2V31.4L34.7 34.6 31.8 31.2Z" fill="#c4c4c4"/><path d="M33 27.6 45.8 26.2 47.4 28.4 34 30.2Z" fill="#f0f0f0"/><path d="M34 32.8 47.6 30.2" stroke="#a4a4a4" stroke-width="1.1"/><path d="M29.5 27.5 33.8 26.8 35 29V35.5L31 36.2Z" fill="#262626"/><path d="M17 29.4 28.8 27.2Q33.8 27.5 34.1 30V35.5Q33.8 36.8 28.8 37.1L18.5 39Q16.2 38.5 16.2 35Z" fill="#141414"/><path d="M19 41 33 39" stroke="#f0f0f0" stroke-width="1.5"/></svg></div>
<div class="t" style="left:97px;top:512px;font-size:13.2px;color:#087d08">Датчик давления кондиционера VW POLO,JETTA,PASSAT или TIGUAN</div>
<div class="t" style="left:97px;top:530px;height:26px;line-height:26px;padding:0 2px;background:#d3fcd3;border-radius:7px;font-size:11px;color:#14bd14">У поставщика: <b>4 шт.</b></div>
<div class="abs" style="left:619px;top:526px;height:26px"><svg class="mp" width="26" height="26" viewBox="0 0 26 26"><defs><clipPath id="sq5o"><path d="M13.0 0C22.23 0 26 3.77 26 13.0C26 22.23 22.23 26 13.0 26C3.77 26 0 22.23 0 13.0C0 3.77 3.77 0 13.0 0Z"/></clipPath></defs><g clip-path="url(#sq5o)"><rect width="26" height="26" fill="#0a5cff"/><path d="M13.00 26 13.65 14.5 16.25 11.5 20.04 12 26 19.2V26Z" fill="#f5124f"/><g transform="translate(-1.52 19.6) rotate(-13)"><text x="0" y="0" font-family="Liberation Sans" font-weight="bold" font-size="12.46" letter-spacing="0.11" fill="#fff">ozon</text></g></g></svg></div>
<div class="t" style="left:721px;top:532px;font-size:15px;color:#555">1050</div>
<div class="t" style="left:831px;top:532px;font-size:15px;font-weight:bold;color:#000">0</div>
<div class="t" style="right:297px;top:508px;height:22px;line-height:22px;font-size:13px;font-weight:bold;color:#000;background:#fff43c;padding-right:0">3150<svg class="rub" width="7" height="10" viewBox="0 0 7 10"><path d="M1.7 10V0.65h2.5a2.3 2.3 0 0 1 0 4.6H0M0 7.1h5.4" fill="none" stroke="#000" stroke-width="1.2"/></svg></div>
<div class="t" style="right:299px;top:543px;font-size:15px;color:#151515">200<span style="margin-left:12px">%</span></div>
<div class="t" style="right:187px;top:508px;height:22px;line-height:22px;font-size:13px;font-weight:bold;color:#000;background:#fff43c;padding-right:0">3150<svg class="rub" width="7" height="10" viewBox="0 0 7 10"><path d="M1.7 10V0.65h2.5a2.3 2.3 0 0 1 0 4.6H0M0 7.1h5.4" fill="none" stroke="#000" stroke-width="1.2"/></svg></div>
<div class="t" style="right:189px;top:543px;font-size:15px;color:#151515">200<span style="margin-left:12px">%</span></div>
<div class="t" style="right:77px;top:508px;height:22px;line-height:22px;font-size:13px;font-weight:bold;color:#000;background:#fff43c;padding-right:0">3150<svg class="rub" width="7" height="10" viewBox="0 0 7 10"><path d="M1.7 10V0.65h2.5a2.3 2.3 0 0 1 0 4.6H0M0 7.1h5.4" fill="none" stroke="#000" stroke-width="1.2"/></svg></div>
<div class="t" style="right:79px;top:543px;font-size:15px;color:#151515">200<span style="margin-left:12px">%</span></div>
<svg class="abs" style="left:1274px;top:531px" width="20" height="20" viewBox="0 0 20 20"><path d="M6.6 13.6 16.9 4.4" stroke="#f0a23e" stroke-width="4.4" stroke-linecap="round"/><path d="M8.4 11.2 11 13.4M10 9.8 12.6 12" stroke="#e59430" stroke-width="0.5"/><path d="M4.6 12.6 7.8 15.6 2.8 17.6Z" fill="#f4dcb4"/><path d="M2.4 16.4 3.9 17.8 1.9 18.5Z" fill="#3a3a3a"/></svg>
<div class="abs" style="left:1304.0px;top:537.3px;width:4.1px;height:4.1px;border-radius:50%;background:#000"></div>
<div class="abs" style="left:1310.7px;top:537.3px;width:4.1px;height:4.1px;border-radius:50%;background:#000"></div>
<div class="abs" style="left:1317.4px;top:537.3px;width:4.1px;height:4.1px;border-radius:50%;background:#000"></div>
<div class="abs" style="left:0;top:573px;width:1326px;height:64px;background:#fff"></div>
<div class="abs" style="left:710px;top:573px;width:549px;height:64px;background:#eef1f6"></div>
<div class="abs" style="left:930px;top:573px;width:109px;height:22px;background:#ffff30"></div>
<div class="abs" style="left:1040px;top:573px;width:109px;height:22px;background:#ffff30"></div>
<div class="abs" style="left:1150px;top:573px;width:109px;height:22px;background:#ffff30"></div>
<div class="hl" style="left:0;top:637px;width:1326px"></div>
<svg class="abs" style="left:7px;top:596px" width="17" height="17" viewBox="0 0 17 17"><rect x="1" y="1" width="15" height="15" rx="2.2" fill="none" stroke="#2f74cc" stroke-width="1.9"/></svg>
<div class="abs" style="left:0;top:573px;width:96px;height:64px"><svg class="abs" style="left:31px;top:0" width="65" height="64" viewBox="0 0 65 64"><defs><linearGradient id="aaag" x1="0" y1="0" x2="0" y2="1"><stop offset="0" stop-color="#0c1a12"/><stop offset="0.55" stop-color="#164a2c"/><stop offset="1" stop-color="#22843f"/></linearGradient></defs><rect x="17.5" y="11.9" width="28.8" height="40" rx="1.6" fill="#0d130f"/><path d="M17.5 27C26 26 36 27 46.3 29V49H17.5Z" fill="url(#aaag)"/><path d="M17.5 37Q23 39 24 49H17.5Z" fill="#1aa2d6"/><path d="M18 40Q28 36 46 42" stroke="#c8e050" stroke-width="0.5" fill="none"/><rect x="17.5" y="48.4" width="28.8" height="3.5" rx="0.8" fill="#f2bc18"/><rect x="20" y="49.6" width="24" height="0.9" fill="#d8402a"/><rect x="26.5" y="15.2" width="10.9" height="2.7" fill="#f2f2f2"/><rect x="19.5" y="14" width="4.5" height="3.5" fill="#b8b8a0"/><rect x="39.5" y="13.5" width="5" height="3.5" fill="#d8d8c8"/><text x="22.5" y="24" font-family="Liberation Sans" font-size="6.6" fill="#f4f4f4" textLength="17.5" lengthAdjust="spacingAndGlyphs">perfeo</text><rect x="24.2" y="24.6" width="19.5" height="2" fill="#e6d21e"/><rect x="28" y="29.5" width="4" height="16.5" rx="1" fill="#b0b4b4"/><rect x="32.8" y="29.5" width="4" height="16.5" rx="1" fill="#c4c8c8"/><rect x="28.8" y="30" width="1" height="11" fill="#e8e8e8"/><rect x="33.6" y="30" width="1" height="11" fill="#e8e8e8"/><rect x="28" y="41" width="8.8" height="5" fill="#8cc83a"/></svg></div>
<div class="t" style="left:97px;top:577px;font-size:13.2px;color:#087d08">Аккумуляторы AAA R03 1000 мА Perfeo, 2 шт.</div>
<div class="t" style="left:97px;top:595px;height:26px;line-height:26px;padding:0 2px;background:#d3fcd3;border-radius:7px;font-size:11px;color:#14bd14">У поставщика: <b>0 шт.</b></div>
<div class="abs" style="left:619px;top:591px;height:26px"><svg class="mp" width="24" height="26" viewBox="0 0 24 26"><defs><clipPath id="sq6o"><path d="M12.0 0C20.52 0 24 3.77 24 13.0C24 22.23 20.52 26 12.0 26C3.48 26 0 22.23 0 13.0C0 3.77 3.48 0 12.0 0Z"/></clipPath></defs><g clip-path="url(#sq6o)"><rect width="24" height="26" fill="#0a5cff"/><path d="M12.00 26 12.60 14.5 15.00 11.5 18.50 12 24 19.2V26Z" fill="#f5124f"/><g transform="translate(-1.40 19.6) rotate(-13)"><text x="0" y="0" font-family="Liberation Sans" font-weight="bold" font-size="11.50" letter-spacing="0.10" fill="#fff">ozon</text></g></g></svg></div>
<div class="abs" style="left:649px;top:591px;height:26px"><svg class="mp" width="24" height="26" viewBox="0 0 24 26"><path d="M12.0 0C20.52 0 24 3.77 24 13.0C24 22.23 20.52 26 12.0 26C3.48 26 0 22.23 0 13.0C0 3.77 3.48 0 12.0 0Z" fill="#fdd52b"/><path d="M1.00 18.8 8.40 10.6 10.00 19.8 19.20 7 21.00 16.2Q21.80 18 25.00 17.2" fill="none" stroke="#1b1a17" stroke-width="4.2" stroke-linejoin="round"/></svg></div>
<div class="abs" style="left:679px;top:591px;height:26px"><svg class="mp" width="24" height="26" viewBox="0 0 24 26"><defs><linearGradient id="wg6w" x1="1" y1="0" x2="0" y2="1"><stop offset="0" stop-color="#ee3ddc"/><stop offset="1" stop-color="#6c0ff6"/></linearGradient></defs><path d="M12.0 0C20.52 0 24 3.77 24 13.0C24 22.23 20.52 26 12.0 26C3.48 26 0 22.23 0 13.0C0 3.77 3.48 0 12.0 0Z" fill="url(#wg6w)"/><text y="18" font-family="Liberation Sans" font-size="16.2" fill="#fff" stroke="#fff" stroke-width="0.5"><tspan x="1.60" textLength="10.60" lengthAdjust="spacingAndGlyphs">w</tspan><tspan x="12.60">b</tspan></text></svg></div>
<div class="t" style="left:721px;top:597px;font-size:15px;color:#555">93.6</div>
<div class="t" style="left:831px;top:597px;font-size:15px;font-weight:bold;color:#000">0</div>
<div class="t" style="right:297px;top:573px;height:22px;line-height:22px;font-size:13px;font-weight:bold;color:#000;background:#fff43c;padding-right:0">786<svg class="rub" width="7" height="10" viewBox="0 0 7 10"><path d="M1.7 10V0.65h2.5a2.3 2.3 0 0 1 0 4.6H0M0 7.1h5.4" fill="none" stroke="#000" stroke-width="1.2"/></svg></div>
<div class="t" style="right:299px;top:608px;font-size:15px;color:#151515">320<span style="margin-left:12px">%</span></div>
<div class="t" style="right:187px;top:573px;height:22px;line-height:22px;font-size:13px;font-weight:bold;color:#000;background:#fff43c;padding-right:0">805<svg class="rub" width="7" height="10" viewBox="0 0 7 10"><path d="M1.7 10V0.65h2.5a2.3 2.3 0 0 1 0 4.6H0M0 7.1h5.4" fill="none" stroke="#000" stroke-width="1.2"/></svg></div>
<div class="t" style="right:189px;top:608px;font-size:15px;color:#151515">330<span style="margin-left:12px">%</span></div>
<div class="t" style="right:77px;top:573px;height:22px;line-height:22px;font-size:13px;font-weight:bold;color:#000;background:#fff43c;padding-right:0">805<svg class="rub" width="7" height="10" viewBox="0 0 7 10"><path d="M1.7 10V0.65h2.5a2.3 2.3 0 0 1 0 4.6H0M0 7.1h5.4" fill="none" stroke="#000" stroke-width="1.2"/></svg></div>
<div class="t" style="right:79px;top:608px;font-size:15px;color:#151515">330<span style="margin-left:12px">%</span></div>
<svg class="abs" style="left:1274px;top:596px" width="20" height="20" viewBox="0 0 20 20"><path d="M6.6 13.6 16.9 4.4" stroke="#f0a23e" stroke-width="4.4" stroke-linecap="round"/><path d="M8.4 11.2 11 13.4M10 9.8 12.6 12" stroke="#e59430" stroke-width="0.5"/><path d="M4.6 12.6 7.8 15.6 2.8 17.6Z" fill="#f4dcb4"/><path d="M2.4 16.4 3.9 17.8 1.9 18.5Z" fill="#3a3a3a"/></svg>
<div class="abs" style="left:1304.0px;top:602.3px;width:4.1px;height:4.1px;border-radius:50%;background:#000"></div>
<div class="abs" style="left:1310.7px;top:602.3px;width:4.1px;height:4.1px;border-radius:50%;background:#000"></div>
<div class="abs" style="left:1317.4px;top:602.3px;width:4.1px;height:4.1px;border-radius:50%;background:#000"></div>
<div class="abs" style="left:0;top:638px;width:1326px;height:64px;background:#fff"></div>
<div class="abs" style="left:710px;top:638px;width:549px;height:64px;background:#eef1f6"></div>
<div class="abs" style="left:930px;top:638px;width:109px;height:22px;background:#ffff30"></div>
<div class="abs" style="left:1040px;top:638px;width:109px;height:22px;background:#ffff30"></div>
<div class="abs" style="left:1150px;top:638px;width:109px;height:22px;background:#ffff30"></div>
<div class="hl" style="left:0;top:702px;width:1326px"></div>
<svg class="abs" style="left:7px;top:661px" width="17" height="17" viewBox="0 0 17 17"><rect x="1" y="1" width="15" height="15" rx="2.2" fill="none" stroke="#2f74cc" stroke-width="1.9"/></svg>
<div class="abs" style="left:0;top:638px;width:96px;height:64px"><svg class="abs" style="left:31px;top:0" width="65" height="64" viewBox="0 0 65 64"><circle cx="32.5" cy="31" r="11.7" fill="none" stroke="#2b2b2b" stroke-width="5.6"/><path d="M18.5 30A14 14 0 0 1 24 20" stroke="#7a6a5a" stroke-width="1" fill="none"/></svg></div>
<div class="t" style="left:97px;top:642px;font-size:13.2px;color:#087d08">Сальник КПП VAG PASSAT, OCTAVIA, RAPID</div>
<div class="t" style="left:97px;top:660px;height:26px;line-height:26px;padding:0 2px;background:#d3fcd3;border-radius:7px;font-size:11px;color:#14bd14">У поставщика: <b>3 шт.</b></div>
<div class="abs" style="left:619px;top:656px;height:26px"><svg class="mp" width="24" height="26" viewBox="0 0 24 26"><defs><clipPath id="sq7o"><path d="M12.0 0C20.52 0 24 3.77 24 13.0C24 22.23 20.52 26 12.0 26C3.48 26 0 22.23 0 13.0C0 3.77 3.48 0 12.0 0Z"/></clipPath></defs><g clip-path="url(#sq7o)"><rect width="24" height="26" fill="#0a5cff"/><path d="M12.00 26 12.60 14.5 15.00 11.5 18.50 12 24 19.2V26Z" fill="#f5124f"/><g transform="translate(-1.40 19.6) rotate(-13)"><text x="0" y="0" font-family="Liberation Sans" font-weight="bold" font-size="11.50" letter-spacing="0.10" fill="#fff">ozon</text></g></g></svg></div>
<div class="abs" style="left:649px;top:656px;height:26px"><svg class="mp" width="24" height="26" viewBox="0 0 24 26"><path d="M12.0 0C20.52 0 24 3.77 24 13.0C24 22.23 20.52 26 12.0 26C3.48 26 0 22.23 0 13.0C0 3.77 3.48 0 12.0 0Z" fill="#fdd52b"/><path d="M1.00 18.8 8.40 10.6 10.00 19.8 19.20 7 21.00 16.2Q21.80 18 25.00 17.2" fill="none" stroke="#1b1a17" stroke-width="4.2" stroke-linejoin="round"/></svg></div>
<div class="abs" style="left:679px;top:656px;height:26px"><svg class="mp" width="24" height="26" viewBox="0 0 24 26"><defs><linearGradient id="wg7w" x1="1" y1="0" x2="0" y2="1"><stop offset="0" stop-color="#ee3ddc"/><stop offset="1" stop-color="#6c0ff6"/></linearGradient></defs><path d="M12.0 0C20.52 0 24 3.77 24 13.0C24 22.23 20.52 26 12.0 26C3.48 26 0 22.23 0 13.0C0 3.77 3.48 0 12.0 0Z" fill="url(#wg7w)"/><text y="18" font-family="Liberation Sans" font-size="16.2" fill="#fff" stroke="#fff" stroke-width="0.5"><tspan x="1.60" textLength="10.60" lengthAdjust="spacingAndGlyphs">w</tspan><tspan x="12.60">b</tspan></text></svg></div>
<div class="t" style="left:721px;top:662px;font-size:15px;color:#555">386</div>
<div class="t" style="left:831px;top:662px;font-size:15px;font-weight:bold;color:#000">0</div>
<div class="t" style="right:297px;top:638px;height:22px;line-height:22px;font-size:13px;font-weight:bold;color:#000;background:#fff43c;padding-right:0">872<svg class="rub" width="7" height="10" viewBox="0 0 7 10"><path d="M1.7 10V0.65h2.5a2.3 2.3 0 0 1 0 4.6H0M0 7.1h5.4" fill="none" stroke="#000" stroke-width="1.2"/></svg></div>
<div class="t" style="right:299px;top:673px;font-size:15px;color:#151515">200<span style="margin-left:12px">%</span></div>
<div class="t" style="right:187px;top:638px;height:22px;line-height:22px;font-size:13px;font-weight:bold;color:#000;background:#fff43c;padding-right:0">899<svg class="rub" width="7" height="10" viewBox="0 0 7 10"><path d="M1.7 10V0.65h2.5a2.3 2.3 0 0 1 0 4.6H0M0 7.1h5.4" fill="none" stroke="#000" stroke-width="1.2"/></svg></div>
<div class="t" style="right:189px;top:673px;font-size:15px;color:#151515">200<span style="margin-left:12px">%</span></div>
<div class="t" style="right:77px;top:638px;height:22px;line-height:22px;font-size:13px;font-weight:bold;color:#000;background:#fff43c;padding-right:0">872<svg class="rub" width="7" height="10" viewBox="0 0 7 10"><path d="M1.7 10V0.65h2.5a2.3 2.3 0 0 1 0 4.6H0M0 7.1h5.4" fill="none" stroke="#000" stroke-width="1.2"/></svg></div>
<div class="t" style="right:79px;top:673px;font-size:15px;color:#151515">200<span style="margin-left:12px">%</span></div>
<svg class="abs" style="left:1274px;top:661px" width="20" height="20" viewBox="0 0 20 20"><path d="M6.6 13.6 16.9 4.4" stroke="#f0a23e" stroke-width="4.4" stroke-linecap="round"/><path d="M8.4 11.2 11 13.4M10 9.8 12.6 12" stroke="#e59430" stroke-width="0.5"/><path d="M4.6 12.6 7.8 15.6 2.8 17.6Z" fill="#f4dcb4"/><path d="M2.4 16.4 3.9 17.8 1.9 18.5Z" fill="#3a3a3a"/></svg>
<div class="abs" style="left:1304.0px;top:667.3px;width:4.1px;height:4.1px;border-radius:50%;background:#000"></div>
<div class="abs" style="left:1310.7px;top:667.3px;width:4.1px;height:4.1px;border-radius:50%;background:#000"></div>
<div class="abs" style="left:1317.4px;top:667.3px;width:4.1px;height:4.1px;border-radius:50%;background:#000"></div>
<div class="vl" style="left:30px;top:184px;height:484px"></div>
<div class="vl" style="left:96px;top:184px;height:484px"></div>
<div class="vl" style="left:612px;top:184px;height:484px"></div>
<div class="vl" style="left:709px;top:184px;height:484px"></div>
<div class="vl" style="left:819px;top:184px;height:484px"></div>
<div class="vl" style="left:929px;top:184px;height:484px"></div>
<div class="vl" style="left:1039px;top:184px;height:484px"></div>
<div class="vl" style="left:1149px;top:184px;height:484px"></div>
<div class="vl" style="left:1259px;top:184px;height:484px"></div>
<div class="abs" style="left:0;top:139px;width:1336px;height:44px;background:#fff"></div>
<div class="hl" style="left:0;top:183px;width:1336px"></div>
<div class="vl" style="left:96px;top:139px;height:44px"></div>
<div class="vl" style="left:613px;top:139px;height:44px"></div>
<div class="vl" style="left:710px;top:139px;height:44px"></div>
<div class="vl" style="left:820px;top:139px;height:44px"></div>
<div class="vl" style="left:930px;top:139px;height:44px"></div>
<div class="vl" style="left:1040px;top:139px;height:44px"></div>
<div class="vl" style="left:1150px;top:139px;height:44px"></div>
<div class="vl" style="left:1260px;top:139px;height:44px"></div>
<svg class="abs" style="left:9px;top:152px" width="18" height="18" viewBox="0 0 17 17"><rect x="1" y="1" width="15" height="15" rx="2.2" fill="none" stroke="#2f74cc" stroke-width="1.9"/></svg>
<svg class="abs" style="left:48px;top:146px" width="31" height="28" viewBox="0 0 31 28"><path d="M11 1.2h9.6l2.8 3H28a2 2 0 0 1 2 2V25a2 2 0 0 1-2 2H3a2 2 0 0 1-2-2V6.2a2 2 0 0 1 2-2h5.2Z" fill="#c9c9c9"/><circle cx="15.5" cy="15.4" r="5.9" fill="none" stroke="#fff" stroke-width="2.8"/></svg>
<div class="t" style="left:104px;top:154px;font-size:13px;color:#777">Наименование</div>
<div class="t" style="left:621px;top:154px;font-size:13px;color:#777">Опубликовано</div>
<div class="t" style="left:718px;top:154px;font-size:13px;color:#777">Цена</div>
<div class="t" style="left:827px;top:145px;font-size:13px;color:#777">Количество</div>
<div class="t" style="left:827px;top:163px;font-size:13px;color:#777">складе</div>
<div class="t" style="left:937px;top:145px;font-size:13px;color:#777">Цена OZ /</div>
<div class="t" style="left:937px;top:163px;font-size:13px;color:#777">Наценка OZ</div>
<div class="t" style="left:1047px;top:145px;font-size:13px;color:#777">Цена WB /</div>
<div class="t" style="left:1047px;top:163px;font-size:13px;color:#777">Наценка WB</div>
<div class="t" style="left:1157px;top:145px;font-size:13px;color:#777">Цена ЯМ /</div>
<div class="t" style="left:1157px;top:163px;font-size:13px;color:#777">Наценка ЯМ</div>
<div class="abs" style="left:1326px;top:184px;width:10px;height:484px;background:#f1f1f1"></div>
<div class="abs" style="left:1328px;top:200px;width:8px;height:159px;background:#c1c1c1"></div>
<svg class="abs" style="left:1330px;top:188px" width="6" height="7" viewBox="0 0 6 7"><path d="M0 6 4.5 1.5 9 6Z" fill="#a3a3a3"/></svg>
</body></html>
